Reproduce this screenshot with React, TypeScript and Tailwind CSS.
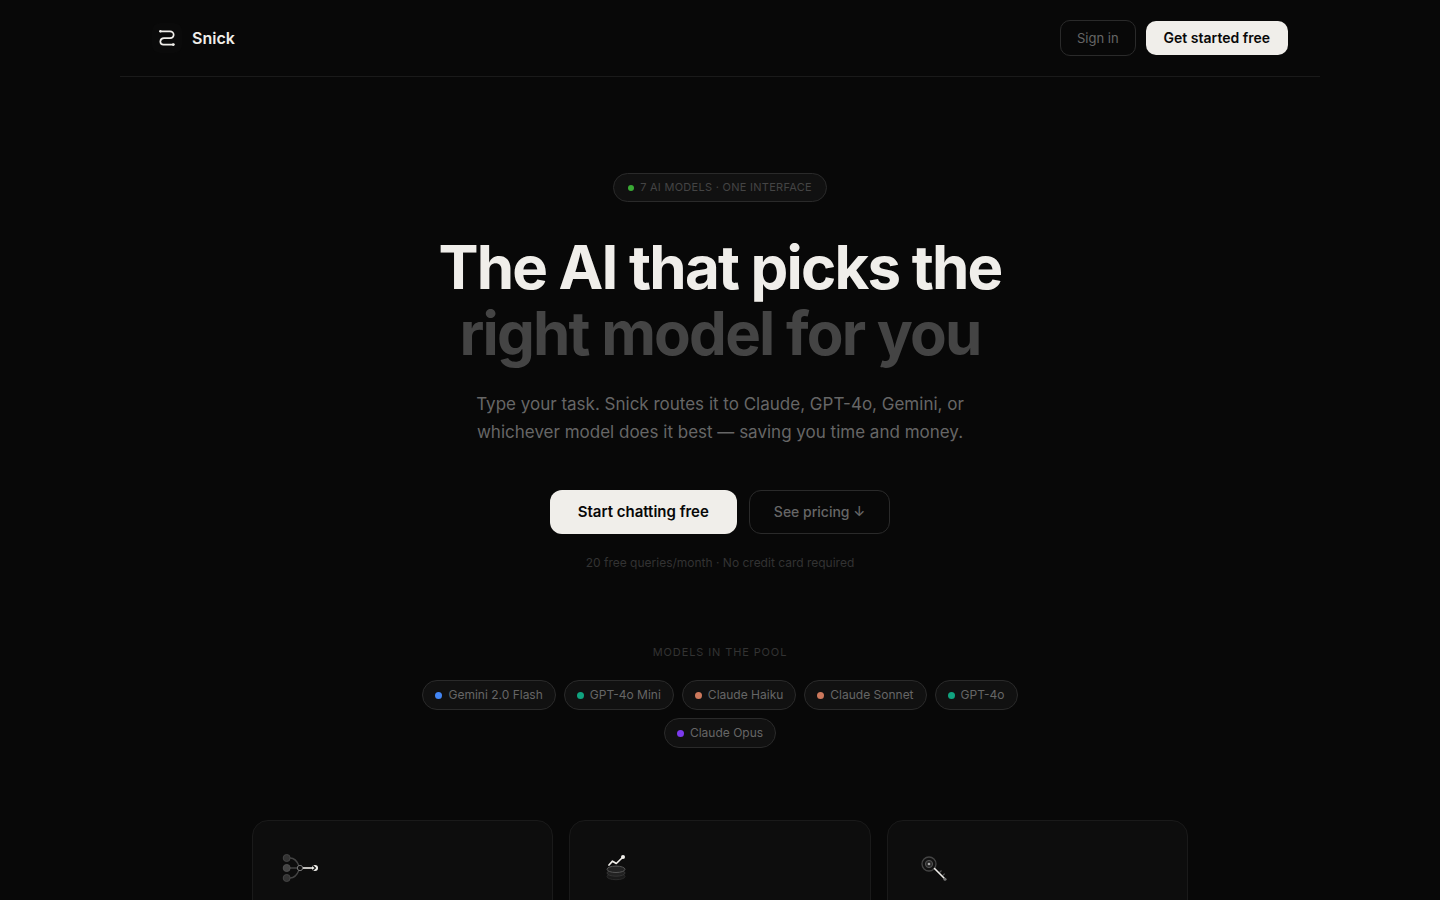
import type { ReactNode } from "react";

const models = [
  { name: "Gemini 2.0 Flash", dot: "bg-[#4285f4]" },
  { name: "GPT-4o Mini", dot: "bg-[#10a37f]" },
  { name: "Claude Haiku", dot: "bg-[#cc785c]" },
  { name: "Claude Sonnet", dot: "bg-[#cc785c]" },
  { name: "GPT-4o", dot: "bg-[#10a37f]" },
  { name: "Claude Opus", dot: "bg-[#7c3aed]" },
];

function LogoIcon() {
  return (
    <svg width="30" height="30" viewBox="0 0 30 30" fill="none" aria-hidden="true">
      <rect width="30" height="30" rx="8" fill="#0a0a0a" />
      <path
        d="M8.300 8.300h9.700a3.700 3.700 0 0 1 3.700 3.700v0a3.700 3.700 0 0 1-3.700 3.200h-6a3.700 3.700 0 0 0-3.700 3.300v0a3.200 3.200 0 0 0 3.200 3.100h10"
        stroke="#f0eeea"
        strokeWidth="1.700"
        strokeLinecap="round"
      />
      <circle cx="8.400" cy="8.300" r="1.200" fill="#f0eeea" />
      <circle cx="21.300" cy="21.600" r="1.400" fill="#f0eeea" />
    </svg>
  );
}

function RouteIcon() {
  return (
    <svg width="36" height="36" viewBox="0 0 36 36" fill="none" aria-hidden="true">
      <path d="M8 8C13 8 15.500 12 17 16M8 28C13 28 15.500 24 17 20M8 18h7" stroke="#444" strokeWidth="1.400" />
      <circle cx="4.700" cy="8" r="3.500" fill="#333" stroke="#444" />
      <circle cx="4.700" cy="18" r="3.500" fill="#444" stroke="#505050" />
      <circle cx="4.700" cy="28" r="3.500" fill="#333" stroke="#444" />
      <path d="M20.500 18H31" stroke="#f0eeea" strokeWidth="1.600" />
      <circle cx="18" cy="18" r="2.700" fill="#111" stroke="#777" />
      <circle cx="33" cy="18" r="3" fill="#f0eeea" />
      <path d="M31 15.800l2.400 2.200-2.400 2.200" stroke="#0d0d0d" strokeWidth="1.200" />
    </svg>
  );
}

function SavingsIcon() {
  return (
    <svg width="36" height="36" viewBox="0 0 36 36" fill="none" aria-hidden="true">
      <ellipse cx="17" cy="26.500" rx="9" ry="3.200" fill="#1a1a1a" stroke="#2a2a2a" />
      <ellipse cx="17" cy="23" rx="9" ry="3.200" fill="#222" stroke="#333" />
      <ellipse cx="17" cy="19.300" rx="9" ry="3.200" fill="#222" stroke="#555" />
      <path
        d="M10 15l3.500-3.800 3.800 2.300L24 7"
        stroke="#f0eeea"
        strokeWidth="1.700"
        strokeLinecap="round"
        strokeLinejoin="round"
      />
      <circle cx="24" cy="7" r="2" fill="#f0eeea" />
    </svg>
  );
}

function KeyIcon() {
  return (
    <svg width="36" height="36" viewBox="0 0 36 36" fill="none" aria-hidden="true">
      <circle cx="12" cy="14" r="7" fill="#111" stroke="#444" strokeWidth="1.300" />
      <circle cx="12" cy="14" r="3.600" fill="#2a2a2a" stroke="#555" />
      <circle cx="12" cy="14" r="1.300" fill="#aaa" />
      <path d="M22.500 22.500l2-2M25.700 25.700l2-2" stroke="#555" strokeWidth="1.200" />
      <path d="M17.500 18.500L27 28" stroke="#f0eeea" strokeWidth="1.600" strokeLinecap="round" />
      <circle cx="28" cy="29.300" r="1.500" fill="#777" />
    </svg>
  );
}

function FeatureCard({ children }: { children: ReactNode }) {
  return (
    <article className="min-h-48 rounded-2xl border border-[#1a1a1a] bg-[#0d0d0d] p-[29px]">{children}</article>
  );
}

export default function App() {
  return (
    <div className="h-screen overflow-hidden bg-[#080808] font-['Inter',sans-serif] text-[#f0eeea]">
      <header className="mx-auto flex max-w-[1200px] items-center justify-between border-b border-[#1a1a1a] px-8 py-5">
        <a href="#top" className="flex items-center gap-[10px] text-base leading-6 font-semibold">
          <LogoIcon />
          Snick
        </a>
        <nav className="flex items-center gap-[10px]">
          <a
            href="#signin"
            className="rounded-[10px] border border-[#2a2a2a] px-4 py-2 text-[13px] leading-[18px] text-[#666]"
          >
            Sign in
          </a>
          <button type="button" className="rounded-[10px] bg-[#f0eeea] px-[18px] py-2 text-sm leading-[18px] font-semibold text-[#080808]">
            Get started free
          </button>
        </nav>
      </header>

      <main>
        <section className="flex flex-col items-center px-8 pt-24 text-center">
          <p className="flex items-center gap-[6px] rounded-full border border-[#2a2a2a] bg-[#111] px-[14px] py-[5px] text-[11px] leading-[17px] tracking-wide text-[#444]">
            <span className="size-[6px] rounded-full bg-[#3aaa35]" />
            7 AI MODELS · ONE INTERFACE
          </p>
          <h1 className="mt-8 text-[60px] leading-[66px] font-bold tracking-[-0.03em]">
            The AI that picks the
            <br />
            <span className="text-[#444]">right model for you</span>
          </h1>
          <p className="mt-6 max-w-[500px] text-[17px] leading-7 text-[#666]">
            Type your task. Snick routes it to Claude, GPT-4o, Gemini, or whichever model does it best — saving you
            time and money.
          </p>
          <div className="mt-11 flex items-stretch gap-3">
            <button type="button" className="rounded-xl bg-[#f0eeea] px-7 py-3 text-[15px] leading-5 font-semibold text-[#080808]">
              Start chatting free
            </button>
            <a
              href="#pricing"
              className="rounded-xl border border-[#2a2a2a] px-6 py-[11px] text-sm leading-5 font-medium text-[#666]"
            >
              See pricing ↓
            </a>
          </div>
          <p className="mt-5 text-xs leading-[18px] text-[#333]">20 free queries/month · No credit card required</p>
        </section>

        <section className="mx-auto mt-[72px] flex max-w-[664px] flex-col items-center px-8">
          <h2 className="text-[11px] leading-4 tracking-[0.08em] text-[#333]">MODELS IN THE POOL</h2>
          <ul className="mt-5 flex flex-wrap justify-center gap-2">
            {models.map((model) => (
              <li
                key={model.name}
                className="flex items-center gap-[6px] rounded-full border border-[#2a2a2a] bg-[#111] px-3 py-[5px] text-xs leading-[18px] text-[#666]"
              >
                <span className={`size-[7px] rounded-full ${model.dot}`} />
                {model.name}
              </li>
            ))}
          </ul>
        </section>

        <section className="mx-auto mt-[72px] grid max-w-[1000px] grid-cols-3 gap-4 px-8">
          <FeatureCard>
            <RouteIcon />
          </FeatureCard>
          <FeatureCard>
            <SavingsIcon />
          </FeatureCard>
          <FeatureCard>
            <KeyIcon />
          </FeatureCard>
        </section>
      </main>
    </div>
  );
}
